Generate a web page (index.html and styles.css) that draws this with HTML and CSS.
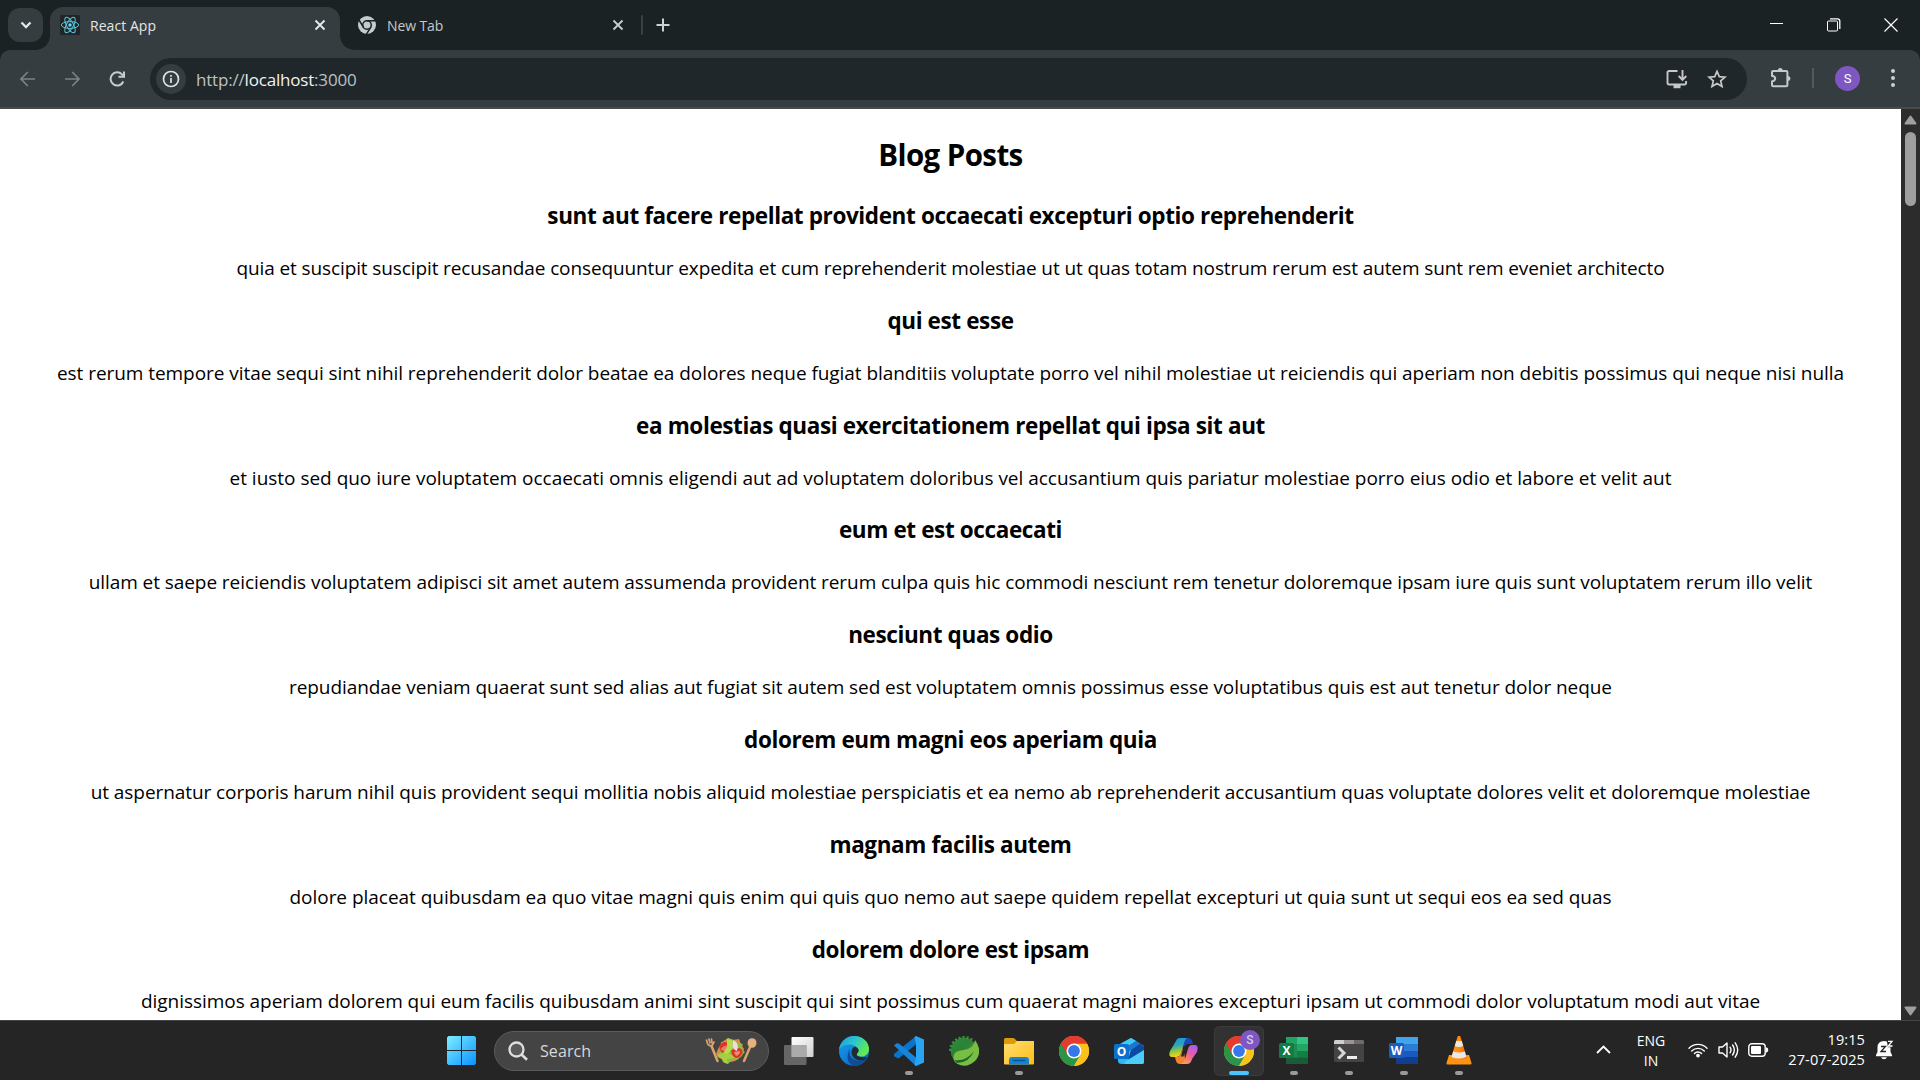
FILE: index.html
```html
<!DOCTYPE html>
<html lang="en">
<head>
<meta charset="utf-8">
<title>React App</title>
<link rel="stylesheet" href="styles.css">
</head>
<body>
<div class="screen">
  <header class="tabstrip">
    <button class="tab-search" aria-label="Search tabs"><svg width="12" height="8" viewBox="0 0 12 8"><path d="M1.5 1.5 6 6l4.500-4.500" fill="none" stroke="#e3e6e6" stroke-width="2.300"/></svg></button>
    <div class="tab active">
      <svg class="favicon" width="20" height="20" viewBox="0 0 20 20"><rect width="20" height="20" rx="1.500" fill="#222525"/><g fill="none" stroke="#58c4dc" stroke-width="1"><ellipse cx="10" cy="10" rx="8.700" ry="3.400"/><ellipse cx="10" cy="10" rx="8.700" ry="3.400" transform="rotate(60 10 10)"/><ellipse cx="10" cy="10" rx="8.700" ry="3.400" transform="rotate(120 10 10)"/></g><circle cx="10" cy="10" r="1.700" fill="#61dafb"/></svg>
      <span class="tab-title">React App</span>
      <svg class="tab-close" width="12" height="12" viewBox="0 0 12 12"><path d="M1.500 1.500l9 9M10.500 1.500l-9 9" stroke="#e6e8e8" stroke-width="1.900"/></svg>
    </div>
    <div class="tab idle">
      <svg class="favicon" width="18" height="18" viewBox="0 0 18 18"><circle cx="9" cy="9" r="9" fill="#c3cbce"/><circle cx="9" cy="9" r="4.300" fill="none" stroke="#1b2224" stroke-width="1.500"/><path d="M9 4.700h8.500M5.300 11.200 1 4M12.800 11.100 8.300 18.500" stroke="#1b2224" stroke-width="1.500"/></svg>
      <span class="tab-title">New Tab</span>
      <svg class="tab-close" width="12" height="12" viewBox="0 0 12 12"><path d="M1.500 1.500l9 9M10.500 1.500l-9 9" stroke="#c9cfd1" stroke-width="1.800"/></svg>
    </div>
    <i class="tab-divider"></i>
    <svg class="new-tab" width="14" height="14" viewBox="0 0 14 14"><path d="M7 .5v13M.5 7h13" stroke="#ccd2d4" stroke-width="2"/></svg>
    <div class="window-buttons">
      <svg width="14" height="14" viewBox="0 0 14 14"><path d="M0 5.500h13" stroke="#fff"/></svg>
      <svg width="14" height="14" viewBox="0 0 14 14" fill="none" stroke="#fff"><rect x=".5" y="3" width="10" height="10" rx="1"/><path d="M3 .8h7.500q2.300 0 2.300 2.300v8" stroke-width="1.300"/></svg>
      <svg width="14" height="14" viewBox="0 0 14 14"><path d="M.5.5l13 13M13.500.5l-13 13" stroke="#fff" stroke-width="1.200"/></svg>
    </div>
  </header>

  <nav class="toolbar">
    <svg class="nav-icon" width="16" height="16" viewBox="0 0 16 16" fill="none" stroke="#7b8284" stroke-width="1.700"><path d="M15 8H1M7.800 1 1 8l6.800 7"/></svg>
    <svg class="nav-icon fwd" width="16" height="16" viewBox="0 0 16 16" fill="none" stroke="#7b8284" stroke-width="1.700"><path d="M0 8h14M7.200 1 14 8l-6.800 7"/></svg>
    <svg class="nav-icon reload" width="16" height="16" viewBox="0 0 16 16" fill="none" stroke="#c7ced0" stroke-width="2"><path d="M14.300 10.500A6.600 6.600 0 1 1 13 3.400L15 5.400"/><path d="M15 .5v5.300H9.500"/></svg>
    <div class="omnibox">
      <span class="site-info"><svg width="18" height="18" viewBox="0 0 18 18"><circle cx="9" cy="9" r="7.500" fill="none" stroke="#dee2e3" stroke-width="1.700"/><path d="M9 8v5M9 5v1.800" stroke="#dee2e3" stroke-width="1.700"/></svg></span>
      <span class="url"><span class="dim">http://</span>localhost<span class="dim">:3000</span></span>
      <svg class="install" width="22" height="20" viewBox="0 0 22 20" fill="none" stroke="#c7c7c7" stroke-width="1.900"><path d="M11.500 2H3.200Q1.500 2 1.500 3.700v10.100q0 1.700 1.700 1.700h15.200q1.700 0 1.700-1.700V12"/><path d="M16.500 1v9M12.700 7l3.800 3.800L20.300 7"/><path d="M7.500 17.500h7" stroke-width="3.500"/></svg>
      <svg class="star" width="20" height="20" viewBox="0 0 20 20"><path d="M10 2.300l2.300 5.300 5.700.5-4.300 3.800 1.300 5.600-5-3-5 3 1.300-5.600L2 8.100l5.700-.5z" fill="none" stroke="#c7c7c7" stroke-width="1.700"/></svg>
    </div>
    <svg class="extensions" width="22" height="22" viewBox="0 0 22 22"><path d="M3.200 3.900h13q1.200 0 1.200 1.200v13q0 1.200-1.200 1.200h-13q-1.200 0-1.200-1.200v-3.600q3.200-.8 3.200-2.900T2 8.700V5.100q0-1.200 1.200-1.200z" fill="none" stroke="#c1cacd" stroke-width="2"/><path d="M7.700 3.500a2.500 2.500 0 0 1 5 0zM18 9a2.500 2.500 0 0 1 0 5z" fill="#c1cacd"/></svg>
    <i class="bar-divider"></i>
    <span class="avatar">S</span>
    <svg class="menu" width="6" height="20" viewBox="0 0 6 20" fill="#c9d0d2"><circle cx="3" cy="3" r="2"/><circle cx="3" cy="10" r="2"/><circle cx="3" cy="17" r="2"/></svg>
  </nav>

  <div class="viewport">
    <main class="posts">
      <h2>Blog Posts</h2>
      <h3>sunt aut facere repellat provident occaecati excepturi optio reprehenderit</h3>
      <p>quia et suscipit suscipit recusandae consequuntur expedita et cum reprehenderit molestiae ut ut quas totam nostrum rerum est autem sunt rem eveniet architecto</p>
      <h3>qui est esse</h3>
      <p>est rerum tempore vitae sequi sint nihil reprehenderit dolor beatae ea dolores neque fugiat blanditiis voluptate porro vel nihil molestiae ut reiciendis qui aperiam non debitis possimus qui neque nisi nulla</p>
      <h3>ea molestias quasi exercitationem repellat qui ipsa sit aut</h3>
      <p>et iusto sed quo iure voluptatem occaecati omnis eligendi aut ad voluptatem doloribus vel accusantium quis pariatur molestiae porro eius odio et labore et velit aut</p>
      <h3>eum et est occaecati</h3>
      <p>ullam et saepe reiciendis voluptatem adipisci sit amet autem assumenda provident rerum culpa quis hic commodi nesciunt rem tenetur doloremque ipsam iure quis sunt voluptatem rerum illo velit</p>
      <h3>nesciunt quas odio</h3>
      <p>repudiandae veniam quaerat sunt sed alias aut fugiat sit autem sed est voluptatem omnis possimus esse voluptatibus quis est aut tenetur dolor neque</p>
      <h3>dolorem eum magni eos aperiam quia</h3>
      <p>ut aspernatur corporis harum nihil quis provident sequi mollitia nobis aliquid molestiae perspiciatis et ea nemo ab reprehenderit accusantium quas voluptate dolores velit et doloremque molestiae</p>
      <h3>magnam facilis autem</h3>
      <p>dolore placeat quibusdam ea quo vitae magni quis enim qui quis quo nemo aut saepe quidem repellat excepturi ut quia sunt ut sequi eos ea sed quas</p>
      <h3>dolorem dolore est ipsam</h3>
      <p>dignissimos aperiam dolorem qui eum facilis quibusdam animi sint suscipit qui sint possimus cum quaerat magni maiores excepturi ipsam ut commodi dolor voluptatum modi aut vitae</p>
    </main>
    <aside class="scrollbar">
      <svg width="13" height="10" viewBox="0 0 13 10"><path d="M6.500 1.500 11.500 8.500h-10z" fill="#9f9f9f" stroke="#9f9f9f" stroke-width="2" stroke-linejoin="round"/></svg>
      <i class="thumb"></i>
      <svg class="down" width="13" height="10" viewBox="0 0 13 10"><path d="M6.500 8.500 11.500 1.500h-10z" fill="#9f9f9f" stroke="#9f9f9f" stroke-width="2" stroke-linejoin="round"/></svg>
    </aside>
  </div>

  <footer class="taskbar">
    <svg width="0" height="0" class="defs"><defs>
      <linearGradient id="win" x2="1" y2="1"><stop stop-color="#7deeff"/><stop offset="1" stop-color="#0a93ff"/></linearGradient>
      <linearGradient id="tv" x2="1" y2="1"><stop stop-color="#fff"/><stop offset="1" stop-color="#d0d0d0"/></linearGradient>
      <linearGradient id="edgeTop" x2="1" y2=".5"><stop stop-color="#1b9de2"/><stop offset=".5" stop-color="#2cc3d0"/><stop offset="1" stop-color="#62ea52"/></linearGradient>
      <linearGradient id="edgeLow" x2=".7" y2="1"><stop stop-color="#1ba4ec"/><stop offset="1" stop-color="#0866c9"/></linearGradient>
      <linearGradient id="spring" x2="1" y2="1"><stop stop-color="#2f8a37"/><stop offset=".45" stop-color="#2b8136"/><stop offset="1" stop-color="#72c043"/></linearGradient>
      <linearGradient id="folder" x2="1" y2="1"><stop stop-color="#ffdf70"/><stop offset="1" stop-color="#fdbb16"/></linearGradient>
      <linearGradient id="cpA" x2=".2" y2="1"><stop stop-color="#1594ee"/><stop offset=".45" stop-color="#2ca6b4"/><stop offset=".75" stop-color="#96cb3b"/><stop offset="1" stop-color="#ffce16"/></linearGradient>
      <linearGradient id="cpB" x1=".8" x2=".2" y2="1"><stop stop-color="#a65cf4"/><stop offset=".5" stop-color="#ef5f9e"/><stop offset="1" stop-color="#ffa04f"/></linearGradient>
      <linearGradient id="cone" x2="1"><stop stop-color="#ff9c1a"/><stop offset=".5" stop-color="#ff8b0d"/><stop offset="1" stop-color="#e96500"/></linearGradient>
      <g id="chrome"><circle cx="15" cy="15" r="15" fill="#f9c31f"/><path d="M15 15 2 7.500A15 15 0 0 1 28 7.500z" fill="#e33b2e"/><path d="M2 7.500A15 15 0 0 0 15 30L21.500 18.700 15 15z" fill="#2a9447"/><path d="M15 7.500h13A15 15 0 0 1 15 30l6.500-11.200z" fill="#fbc21c"/><path d="M2 7.500 8.500 18.700 15 15V7.500h13A15 15 0 0 0 2 7.500z" fill="#e33b2e"/><circle cx="15" cy="15" r="7.500" fill="#fff"/><circle cx="15" cy="15" r="5.900" fill="#3478ea"/></g>
    </defs></svg>
    <svg class="start" width="29" height="29" viewBox="0 0 29 29"><path d="M1.500 0H14v14H0V1.500zM15 0h12.500L29 1.500V14H15zM0 15h14v14H1.500L0 27.500zM15 15h14v12.500L27.500 29H15z" fill="url(#win)"/></svg>
    <div class="search">
      <svg width="20" height="20" viewBox="0 0 20 20" fill="none" stroke="#dedede"><circle cx="8.500" cy="8.500" r="7" stroke-width="2.300" fill="#5a5a5a"/><path d="M13.500 13.500 19 18.800" stroke-width="2.600"/></svg>
      <span>Search</span>
      <svg class="salad" width="52" height="28" viewBox="0 0 52 28"><g fill="none" stroke="#dda26c" stroke-linecap="round"><path d="M6.500 9 12.500 24" stroke-width="2.500"/><path d="M1.500 3l1 3.500q2 3.500 5 1.500L9 5M4 2l1 4M6.500 2l.5 4" stroke-width="1.700"/><path d="M45.500 9 39 24" stroke-width="2.500"/></g><ellipse cx="47" cy="6" rx="4.500" ry="4.800" fill="#e5b17e"/><path d="M17 5l6-4 5 2 6-1 2 5 3 5-2 7-7 5-4 1-5-1-7-3-3-4 2-5z" fill="#d98b4e"/><path d="M16 5l5 1 2-5 6 2 4 3 5 1-2 5 4 3-4 4-4 4-5 0-4 4-4-5-7-2 3-5z" fill="#91bd38"/><circle cx="20" cy="10.500" r="5.500" fill="#d93527"/><path d="M15.500 12q4-5 8.500-3l-2 5q-4 1-6.500-2z" fill="#ee7961"/><path d="M26 13l8-2q4 1 3.500 5-2 5-7 5-4-2-4.500-8z" fill="#d93527"/><path d="M29 15l6-1q0 4-4 5z" fill="#f08b72"/><path d="M22 2l5 1 1 8-5 6-6 1 5-8z" fill="#b7db4b"/><path d="M28 3q7 3 4 11-6-2-4-11z" fill="#ecdaf0"/><path d="M12 18q5-3 13-1l5 4-8 1 1 5q-6-1-6-5z" fill="#a5d043"/></svg>
    </div>
    <div class="apps">
      <div class="app"><svg width="30" height="30" viewBox="0 0 30 30"><rect x="7.500" y="1" width="22" height="20" rx="1" fill="url(#tv)"/><rect x="0" y="9" width="22.500" height="20" rx="1" fill="#777" fill-opacity=".8"/><path d="M7.500 9h15v12h-15z" fill="#aaa"/></svg></div>
      <div class="app"><svg width="30" height="30" viewBox="0 0 30 30"><circle cx="15" cy="15" r="15" fill="url(#edgeLow)"/><path d="M11 13q-1.500 4 1 8 5 6 15 2.500Q22 31 14 30q-7-4-5-12 0-3 2-5z" fill="#114c95"/><path d="M0 13C2 4 9 0 15 0c9 0 15 6 15 13 0 6-5 8-9 7.500-3-.4-4-1.700-3-3Q21 13 16 10 8 6 0 13z" fill="url(#edgeTop)"/><path d="M16 10.500q6 3 2.500 6.500-2 2 1 3.500 3 1 8 .5v2q-6 3-11 0-4-3-4-7 0-4 3.500-5.500z" fill="#242a2e"/></svg></div>
      <div class="app run"><svg width="30" height="30" viewBox="0 0 30 30"><path d="M22 0v8.500L4.500 22.500 0 20.200V18z" fill="#0a75c8"/><path d="M0 9.500 2.500 7.200 5 7.500 22 21.500V30z" fill="#1685d8"/><path d="M22 0l8 3.500v23L22 30l-1.500-1 1.500-7V8l-1.500-7z" fill="#27a5f4"/></svg></div>
      <div class="app"><svg width="30" height="30" viewBox="0 0 30 30"><circle cx="15" cy="15" r="13.200" fill="url(#spring)"/><path d="M15 15m-13.500 0a13.500 13.500 0 0 1 22-10.500" fill="none" stroke="#398d3b" stroke-width="3" stroke-dasharray="2.200 1.700"/><path d="M26 4q8 11 1 20-9 9-18.500 4Q3 25 5 19c2-6 11-4 16-7 3-2 4-4 5-8z" fill="#79be43"/><path d="M5 24q12 2 20-9-5 12-17 12z" fill="#1c692e"/></svg></div>
      <div class="app run"><svg width="30" height="30" viewBox="0 0 30 30"><path d="M0 3.500Q0 2 1.500 2H9q1.500 0 2.500 1.500L13 5h15q2 0 2 2v9H0z" fill="#df9a0a"/><path d="M0 8h10l3-3h17v22.500q0 1-1 1H1q-1 0-1-1z" fill="url(#folder)"/><path d="M5 28.500V24q0-3 3-3h14q3 0 3 3v4.500z" fill="#1683d4"/><path d="M8.500 24.500h13" stroke="#07569c" stroke-width="1.500"/></svg></div>
      <div class="app"><svg width="30" height="30" viewBox="0 0 30 30"><use href="#chrome"/></svg></div>
      <div class="app"><svg width="30" height="30" viewBox="0 0 30 30"><path d="M4 9 17 2l13 8v16q0 2-2 2H8q-4 0-4-3z" fill="#31b6ef"/><path d="M8 7l9-5 5 3L9 13z" fill="#42c8f6"/><path d="M14 10l8-5 4 2.500L10 19z" fill="#1976d2"/><path d="M17 14l9-6.500 4 3V15L14 24z" fill="#0b4aa0"/><path d="M30 14 12 25l-2 3h18q2 0 2-2z" fill="#4ccdf5"/><rect y="8" width="15" height="15" rx="1.500" fill="#0c70cd"/><text x="7.500" y="20" class="glyph">O</text></svg></div>
      <div class="app"><svg width="30" height="30" viewBox="0 0 30 30"><path d="M13 2h6q3 0 4 3l1 3h-5q-3 0-4 4l-2 7z" fill="#1948bc"/><path d="M7 5q1-3 4-3h7q-2 1-3 5l-3 10q-1 4-5 4H3q-4 0-2-6z" fill="url(#cpA)"/><path d="M17 28h-6q-3 0-4-3l-1-4h2q3 0 4-4l2-6z" fill="#f4832f"/><path d="M23 23q-1 5-5 5h-6q3-1 4-5l3-10q1-4 4-4h3q4 0 2 7z" fill="url(#cpB)"/><path d="M14.500 10h3l-3 10.500H12z" fill="#282828"/></svg></div>
      <div class="app current"><svg width="30" height="30" viewBox="0 0 30 30"><use href="#chrome"/></svg><b class="profile">S</b></div>
      <div class="app run"><svg width="30" height="30" viewBox="0 0 30 30"><path d="M7 1h22v27H7z" fill="#1f8c50"/><path d="M18 1h11v7H18z" fill="#34c481"/><path d="M7 1h11v7H7z" fill="#22a366"/><path d="M18 8h11v7H18z" fill="#21a765"/><path d="M18 15h11v6.500H18z" fill="#118044"/><path d="M7 21.500h22V28H7z" fill="#195d38"/><rect y="7" width="15" height="15" rx="1.500" fill="#117c43"/><text x="7.500" y="19" class="glyph">X</text></svg></div>
      <div class="app run"><svg width="30" height="30" viewBox="0 0 30 30"><rect y="4" width="30" height="22" rx="1.500" fill="#444"/><path d="M0 8V5.500Q0 4 1.500 4H10v4z" fill="#d0cdce"/><path d="M10 4h10v4H10z" fill="#989394"/><path d="M20 4h8.500Q30 4 30 5.500V8H20z" fill="#6f6b6d"/><path d="M4.500 11.500 10 17l-5.500 5.500" fill="none" stroke="#d8d8d8" stroke-width="3"/><path d="M13 21.500h10" stroke="#eee" stroke-width="3"/></svg></div>
      <div class="app run"><svg width="30" height="30" viewBox="0 0 30 30"><path d="M7 1h22v7H7z" fill="#41a5ee"/><path d="M7 8h22v7H7z" fill="#2b7cd3"/><path d="M7 15h22v6.500H7z" fill="#185abd"/><path d="M7 21.500h22V28H7z" fill="#103f91"/><rect y="7" width="15" height="15" rx="1.500" fill="#1b5cbe"/><text x="7.500" y="19" class="glyph">W</text></svg></div>
      <div class="app run"><svg width="30" height="30" viewBox="0 0 30 30"><path d="M5 19h20l2.500 8q.5 1.500-1.500 1.500H4q-2 0-1.500-1.500z" fill="#ff9310"/><path d="M13.800 0h2.400l6.800 22q-8 3.500-16 0z" fill="url(#cone)"/><path d="M12.300 5h5.400l1.500 5q-4 1.800-8.400 0zM9.200 15.500q5.500 2 11.600 0l1.600 5.500q-7.400 3-14.800 0z" fill="#e8e8e8"/></svg></div>
    </div>
    <div class="tray">
      <svg class="chevron" width="15" height="9" viewBox="0 0 15 9"><path d="M1 8l6.500-6.500L14 8" fill="none" stroke="#fff" stroke-width="1.800"/></svg>
      <span class="lang">ENG<br>IN</span>
      <svg class="wifi" width="20" height="16" viewBox="0 0 20 16" fill="none" stroke="#fff" stroke-width="1.400" stroke-linecap="round"><path d="M1 6.200a12.500 12.500 0 0 1 18 0M3.700 9a8.800 8.800 0 0 1 12.600 0M6.400 11.600a5 5 0 0 1 7.200 0"/><circle cx="10" cy="13.600" r="1.200" fill="#fff"/></svg>
      <svg class="volume" width="21" height="18" viewBox="0 0 21 18" fill="none" stroke="#fff" stroke-width="1.400" stroke-linecap="round" stroke-linejoin="round"><path d="M1 6h3.500L9 2v14l-4.500-4H1zM12 6.200q2 2.800 0 5.600M14.600 4q3.500 5 0 10M17.200 1.800q5 7.200 0 14.400"/></svg>
      <svg class="battery" width="21" height="14" viewBox="0 0 21 14"><rect x=".8" y=".8" width="16.400" height="12.400" rx="3" fill="none" stroke="#fff" stroke-width="1.400"/><rect x="3" y="3" width="10" height="8" rx="1" fill="#fff"/><path d="M18 4.300q2.300.3 2.300 2.700T18 9.700z" fill="#fff"/></svg>
      <span class="clock">19:15<br>27-07-2025</span>
      <svg class="bell" width="18" height="20" viewBox="0 0 18 20"><path d="M8 1Q1.500 1 1.500 7.500V12L0 15v1.200h16V15l-1.500-3V7.500Q14.500 1 8 1zM5 17.200h6q-1 2-3 2t-3-2z" fill="#fff"/><path d="M5 6.500h4.500L5 11.500h5" fill="none" stroke="#252525" stroke-width="1.300"/><path d="M10.800 0H18v7.300h-6.200z" fill="#252525"/><path d="M12 1.300h4L12.300 6H16.500" fill="none" stroke="#fff" stroke-width="1.300"/></svg>
    </div>
  </footer>
</div>
</body>
</html>
```
FILE: styles.css
```css
* { box-sizing: border-box; }
body { margin: 0; font-family: "Open Sans", "Noto Sans", sans-serif; }
svg { display: block; flex: none; }
.screen { width: 1920px; height: 1080px; display: flex; flex-direction: column; overflow: hidden; background: #1b2224; }

/* Tab strip */
.tabstrip { height: 50px; flex: none; display: flex; align-items: flex-start; padding-left: 8px; }
.tab-search { width: 35px; height: 34px; margin-top: 8px; padding: 0; border: 0; border-radius: 12px; background: #363d40; display: flex; align-items: center; justify-content: center; }
.tab { display: flex; align-items: center; font-size: 14px; }
.tab.active { position: relative; width: 290px; height: 43px; margin: 7px 0 0 7px; padding: 0 14px 7px 10px; border-radius: 13px 13px 0 0; background: #363d40; color: #e3e5e5; }
.tab.active::before, .tab.active::after { content: ""; position: absolute; bottom: 0; width: 14px; height: 14px; }
.tab.active::before { right: 100%; background: radial-gradient(circle at 0 0, transparent 13.5px, #363d40 14px); }
.tab.active::after { left: 100%; background: radial-gradient(circle at 100% 0, transparent 13.5px, #363d40 14px); }
.tab.idle { width: 283px; height: 36px; margin: 7px 0 0 18px; color: #c3c9cb; }
.tab-title { flex: 1; margin-left: 10px; padding-top: 1px; line-height: 20px; letter-spacing: .05px; }
.idle .tab-title { margin-left: 11px; letter-spacing: -.1px; }
.idle .tab-close { margin-right: 17px; }
.tab-divider { width: 2px; height: 20px; margin-top: 15px; background: #394144; border-radius: 1px; }
.new-tab { margin: 18px 0 0 13px; }
.window-buttons { display: flex; gap: 43px; margin: 18px 22px 0 auto; }

/* Address bar */
.toolbar { height: 59px; flex: none; display: flex; align-items: center; padding: 0 24px 1px 20px; background: #363d40; border-bottom: 2px solid #494b4a; border-radius: 10px 10px 0 0; }
.nav-icon { margin-top: 1px; }
.fwd { margin-left: 29px; }
.reload { margin-left: 28px; }
.omnibox { width: 1597px; height: 42px; flex: none; margin: 1px 0 0 25px; padding: 0 20px 0 6px; border-radius: 21px; background: #1f272a; display: flex; align-items: center; }
.site-info { width: 30px; height: 30px; border-radius: 50%; background: #363d40; display: grid; place-items: center; }
.url { flex: 1; margin-left: 10px; padding-top: 2px; font-size: 17px; letter-spacing: -.19px; line-height: 24px; color: #f1f2f2; }
.dim { color: #bcc1c3; }
.star { margin-left: 19px; }
.extensions { margin-left: 23px; }
.bar-divider { width: 2px; height: 20px; margin-left: 20px; background: #515a5d; }
.avatar { width: 25px; height: 25px; margin-left: 21px; border-radius: 50%; background: #7e57c2; color: #fff; display: grid; place-items: center; font: 13px Roboto, sans-serif; }
.menu { margin-left: 29.500px; }

/* Page */
.viewport { height: 911px; flex: none; display: flex; background: #fff; overflow: hidden; }
.posts { width: 1901px; text-align: center; color: #000; white-space: nowrap; }
.posts h2 { margin: 25.200px 0 22.900px; font-size: 29.500px; font-weight: 700; line-height: 42px; letter-spacing: -.6px; }
.posts h3 { margin: 0; font-size: 22.500px; font-weight: 700; line-height: 33px; letter-spacing: -.38px; }
.posts p { margin: 21.900px 0 21.900px; font-size: 19px; line-height: 28px; letter-spacing: -.07px; }
.posts p:nth-of-type(1) { letter-spacing: -.112px; }
.posts p:nth-of-type(2) { letter-spacing: -.053px; }
.posts p:nth-of-type(3) { letter-spacing: -.016px; }
.posts p:nth-of-type(7) { letter-spacing: -.025px; }
.posts p:nth-of-type(8) { letter-spacing: -.043px; }
.scrollbar { width: 19px; background: #2c2c2c; display: flex; flex-direction: column; align-items: center; padding: 6px 0 4px; }
.thumb { width: 11px; height: 74px; margin-top: 7px; border-radius: 6px; background: #9f9f9f; }
.down { margin-top: auto; }

/* Taskbar */
.taskbar { height: 60px; flex: none; display: flex; align-items: center; background: #252525; border-top: 1px solid #414545; color: #fff; }
.defs { width: 0; }
.start { margin-left: 447px; }
.search { width: 275px; height: 40px; margin-left: 18px; padding: 0 11px 0 13px; border: 1px solid #5b5b5b; border-radius: 20px; background: #444; display: flex; align-items: center; font-size: 16px; letter-spacing: .1px; color: #d8d8d8; }
.search span { flex: 1; margin-left: 12px; }
.apps { display: flex; gap: 5px; margin-left: 5px; }
.app { position: relative; width: 50px; height: 50px; border-radius: 6px; display: grid; place-items: center; }
.current { background: #323232; box-shadow: inset 0 0 0 1px #3b3b3b; }
.run::after, .current::after { content: ""; position: absolute; left: 21px; bottom: 1px; width: 8px; height: 4px; border-radius: 2px; background: #999; }
.current::after { left: 15px; width: 20px; background: #4cc2ff; }
.profile { position: absolute; left: 26px; top: 4px; width: 20px; height: 20px; border-radius: 50%; background: #7e57c2; color: #d9cbed; font: 500 12px/20px Roboto, sans-serif; text-align: center; }
.glyph { fill: #fff; font: 700 12px "Open Sans", sans-serif; text-anchor: middle; }
.tray { flex: 1; display: flex; align-items: center; padding: 0 26px 2px 0; font-size: 14.500px; line-height: 20px; }
.chevron { margin-left: 112px; }
.lang { width: 40px; margin-left: 20px; padding-top: 2px; text-align: center; font-size: 14px; }
.wifi { margin-left: 17px; }
.volume { margin-left: 10px; }
.battery { margin-left: 9px; }
.clock { margin-left: auto; text-align: right; letter-spacing: .1px; }
.bell { margin-left: 11px; }
```
